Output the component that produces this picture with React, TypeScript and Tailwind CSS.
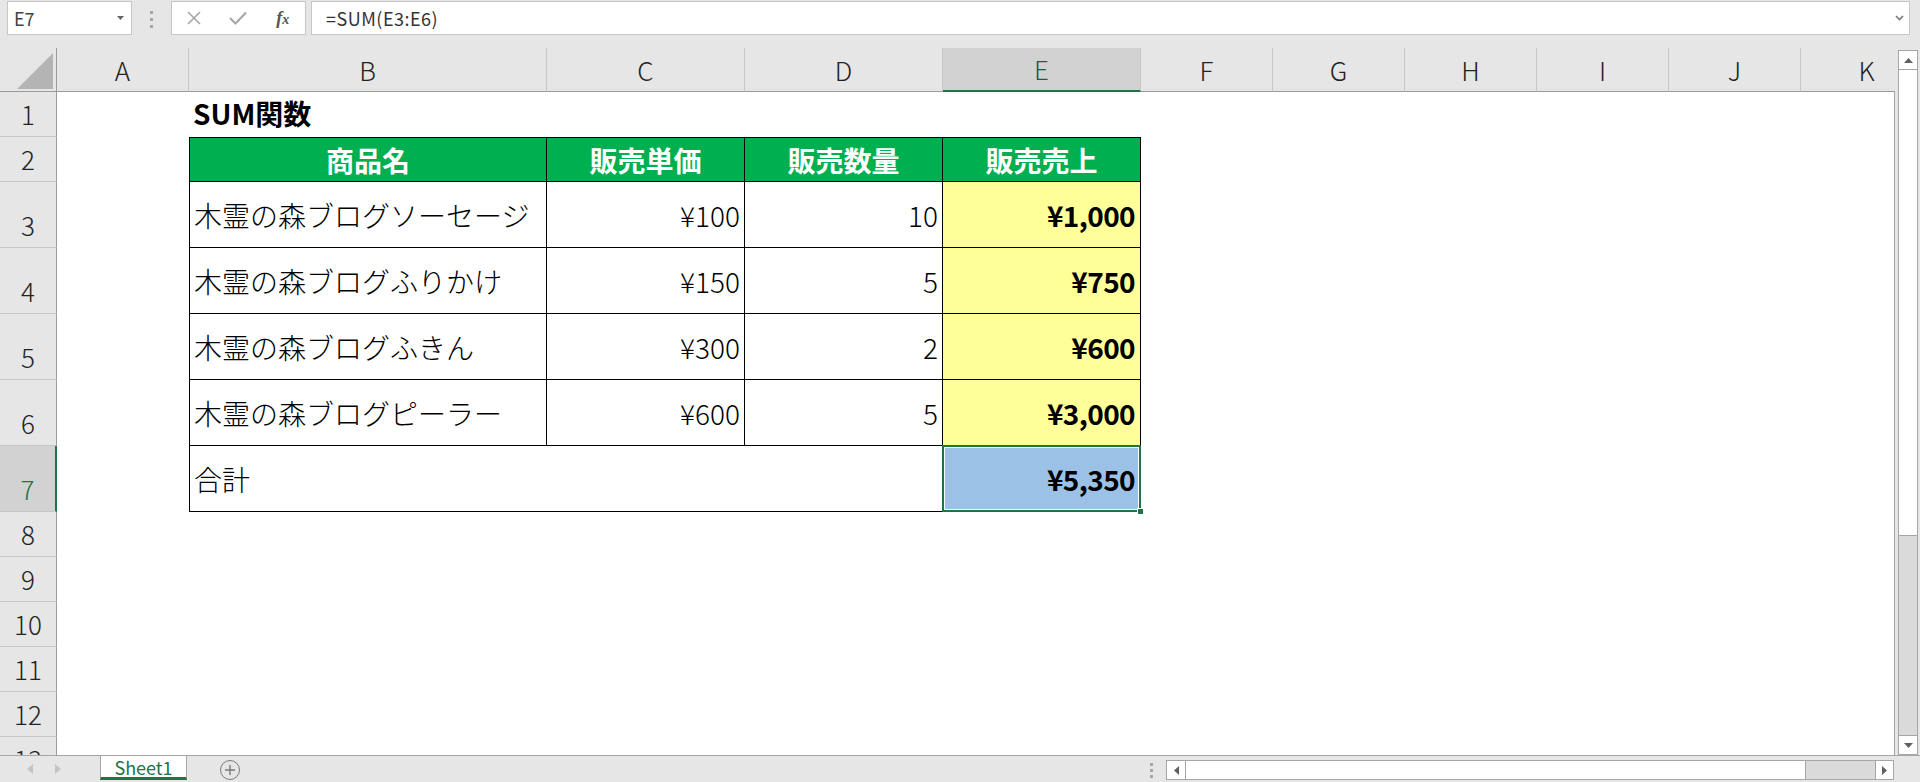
import React from 'react';

const jp = "font-['Noto_Sans_CJK_JP','Noto_Sans',sans-serif]";

const headCols = [
  { id: 'A', w: 'w-[132px]' },
  { id: 'B', w: 'w-[358px]' },
  { id: 'C', w: 'w-[198px]' },
  { id: 'D', w: 'w-[198px]' },
  { id: 'E', w: 'w-[198px]', active: true },
  { id: 'F', w: 'w-[132px]' },
  { id: 'G', w: 'w-[132px]' },
  { id: 'H', w: 'w-[132px]' },
  { id: 'I', w: 'w-[132px]' },
  { id: 'J', w: 'w-[132px]' },
  { id: 'K', w: 'w-[132px]' },
];

const items = [
  { name: '木霊の森ブログソーセージ', price: '¥100', qty: '10', total: '¥1,000' },
  { name: '木霊の森ブログふりかけ', price: '¥150', qty: '5', total: '¥750' },
  { name: '木霊の森ブログふきん', price: '¥300', qty: '2', total: '¥600' },
  { name: '木霊の森ブログピーラー', price: '¥600', qty: '5', total: '¥3,000' },
];

function RowHead({ n, active }: { n: number; active?: boolean }) {
  return (
    <div
      className={`w-[57px] shrink-0 flex items-end justify-center border-b border-[#c6c6c6] ${
        active
          ? 'bg-[#d2d2d2] border-r-2 border-r-[#217346] text-[#217346]'
          : 'bg-[#e6e6e6] border-r border-r-[#9b9b9b] text-[#222]'
      }`}
    >
      <div className="h-[44px] flex items-center justify-center text-[26px] font-light leading-none">{n}</div>
    </div>
  );
}

function FormulaBar() {
  return (
    <div className="h-[48px] shrink-0 flex items-start pt-[1px]">
      <div className="ml-[7px] w-[125px] h-[34px] bg-white border border-[#c6c6c6] flex items-center justify-between pl-[6px] pr-[7px]">
        <span className="text-[18px] text-[#444] leading-none">E7</span>
        <svg width="7" height="4" viewBox="0 0 7 4">
          <path d="M0 0 L7 0 L3.5 4 Z" fill="#666" />
        </svg>
      </div>
      <div className="ml-[18px] mt-[10px] w-[3px] flex flex-col gap-[4px]">
        <div className="h-[3px] bg-[#a6a6a6]" />
        <div className="h-[3px] bg-[#a6a6a6]" />
        <div className="h-[3px] bg-[#a6a6a6]" />
      </div>
      <div className="ml-[18px] w-[135px] h-[34px] bg-white border border-[#c6c6c6] flex items-center">
        <div className="w-[45px] flex justify-center">
          <svg width="14" height="14" viewBox="0 0 14 14">
            <path d="M1 1 L13 13 M13 1 L1 13" stroke="#a6a6a6" strokeWidth="1.6" />
          </svg>
        </div>
        <div className="w-[45px] flex justify-center">
          <svg width="18" height="14" viewBox="0 0 18 14">
            <path d="M1 7 L6.5 12.5 L17 1.5" stroke="#a6a6a6" strokeWidth="2" fill="none" />
          </svg>
        </div>
        <div className="w-[45px] flex justify-center">
          <span className="font-['Liberation_Serif',serif] italic font-bold text-[18px] text-[#555] leading-none">
            f<span className="text-[14px]">x</span>
          </span>
        </div>
      </div>
      <div className="ml-[5px] mr-[10px] flex-1 h-[34px] bg-white border border-[#c6c6c6] flex items-center justify-between pl-[14px] pr-[5px]">
        <span className="text-[18px] tracking-[0.5px] text-[#333] leading-none">=SUM(E3:E6)</span>
        <svg width="9" height="6" viewBox="0 0 9 6">
          <path d="M1 1 L4.5 4.5 L8 1" stroke="#777" strokeWidth="1.6" fill="none" />
        </svg>
      </div>
    </div>
  );
}

function HeaderRow() {
  return (
    <div className="flex h-[44px] shrink-0">
      <div className="w-[57px] shrink-0 border-r border-b border-[#9b9b9b] bg-[#e6e6e6]">
        <svg width="56" height="43" viewBox="0 0 56 43">
          <polygon points="17,41 53,41 53,5" fill="#b4b4b4" />
        </svg>
      </div>
      {headCols.map((c) => (
        <div
          key={c.id}
          className={`${c.w} shrink-0 flex items-center justify-center border-r border-r-[#c6c6c6] text-[26px] font-light leading-none ${
            c.active
              ? 'bg-[#d2d2d2] border-b-2 border-b-[#217346] text-[#1e5c3a]'
              : 'bg-[#e6e6e6] border-b border-b-[#9b9b9b] text-[#222]'
          }`}
        >
          {c.id}
        </div>
      ))}
    </div>
  );
}

function Sheet() {
  const line = 'border-black';
  return (
    <div className="flex-1 bg-white border-r border-[#a6a6a6] overflow-hidden flex flex-col text-black">
      <div className="flex h-[45px] shrink-0">
        <RowHead n={1} />
        <div className="w-[132px] shrink-0" />
        <div className="w-[358px] shrink-0 flex items-center pl-[4px] pb-[3px] text-[28px] font-bold leading-none whitespace-nowrap">
          SUM関数
        </div>
      </div>

      <div className="flex h-[45px] shrink-0">
        <RowHead n={2} />
        <div className="w-[132px] shrink-0" />
        <div className={`w-[358px] shrink-0 flex items-center justify-center bg-[#00b050] border ${line} text-white text-[28px] font-bold leading-none`}>
          商品名
        </div>
        <div className={`w-[198px] shrink-0 flex items-center justify-center bg-[#00b050] border-t border-r border-b ${line} text-white text-[28px] font-bold leading-none`}>
          販売単価
        </div>
        <div className={`w-[198px] shrink-0 flex items-center justify-center bg-[#00b050] border-t border-r border-b ${line} text-white text-[28px] font-bold leading-none`}>
          販売数量
        </div>
        <div className={`w-[198px] shrink-0 flex items-center justify-center bg-[#00b050] border-t border-r border-b ${line} text-white text-[28px] font-bold leading-none`}>
          販売売上
        </div>
      </div>

      {items.map((it, i) => (
        <div key={it.name} className="flex h-[66px] shrink-0">
          <RowHead n={i + 3} />
          <div className="w-[132px] shrink-0" />
          <div className={`w-[358px] shrink-0 flex items-center px-[4px] border-l border-r border-b ${line} text-[28px] font-light leading-none whitespace-nowrap`}>
            {it.name}
          </div>
          <div className={`w-[198px] shrink-0 flex items-center justify-end pr-[4px] border-r border-b ${line} text-[28px] font-light leading-none`}>
            {it.price}
          </div>
          <div className={`w-[198px] shrink-0 flex items-center justify-end pr-[4px] border-r border-b ${line} text-[28px] font-light leading-none`}>
            {it.qty}
          </div>
          <div className={`w-[198px] shrink-0 flex items-center justify-end pr-[5px] bg-[#ffff99] border-r border-b ${line} text-[28px] font-bold tracking-[-0.6px] leading-none`}>
            {it.total}
          </div>
        </div>
      ))}

      <div className="flex h-[66px] shrink-0">
        <RowHead n={7} active />
        <div className="w-[132px] shrink-0" />
        <div className={`w-[754px] shrink-0 flex items-center px-[4px] border-l border-r border-b ${line} text-[28px] font-light leading-none`}>
          合計
        </div>
        <div className={`relative w-[198px] shrink-0 flex items-center justify-end pr-[5px] bg-[#9bc2e6] border-r border-b ${line} text-[28px] font-bold tracking-[-0.6px] leading-none`}>
          ¥5,350
          <div className="absolute -top-[1px] -left-[1px] -right-[1px] -bottom-[1px] border-2 border-[#217346] z-10">
            <div className="w-full h-full border border-white" />
          </div>
          <div className="absolute -right-[4px] -bottom-[4px] w-[7px] h-[7px] bg-[#217346] border border-white z-20" />
        </div>
      </div>

      {[8, 9, 10, 11, 12, 13].map((n) => (
        <div key={n} className="flex h-[45px] shrink-0">
          <RowHead n={n} />
        </div>
      ))}
    </div>
  );
}

function VScroll() {
  return (
    <div className="ml-[3px] mt-[2px] w-[20px] flex flex-col border border-[#a6a6a6] bg-[#dadada]">
      <div className="h-[19px] shrink-0 bg-white border-b border-[#a6a6a6] flex items-center justify-center">
        <svg width="9" height="5" viewBox="0 0 9 5">
          <path d="M0 5 L4.5 0 L9 5 Z" fill="#606060" />
        </svg>
      </div>
      <div className="h-[466px] shrink-0 bg-white border-b border-[#a6a6a6]" />
      <div className="flex-1" />
      <div className="h-[19px] shrink-0 bg-white border-t border-[#a6a6a6] flex items-center justify-center">
        <svg width="9" height="5" viewBox="0 0 9 5">
          <path d="M0 0 L4.5 5 L9 0 Z" fill="#606060" />
        </svg>
      </div>
    </div>
  );
}

function TabBar() {
  return (
    <div className="h-[27px] shrink-0 flex items-start border-t border-[#a6a6a6]">
      <div className="w-[100px] h-[26px] flex items-center">
        <svg className="ml-[27px]" width="6" height="10" viewBox="0 0 6 10">
          <path d="M6 0 L0 5 L6 10 Z" fill="#c4c4c4" />
        </svg>
        <svg className="ml-[22px]" width="6" height="10" viewBox="0 0 6 10">
          <path d="M0 0 L6 5 L0 10 Z" fill="#c4c4c4" />
        </svg>
      </div>
      <div className="w-[87px] h-[24px] bg-white border-x border-[#a6a6a6] border-b-[3px] border-b-[#217346] flex items-center justify-center">
        <span className="text-[18px] text-[#217346] leading-none">Sheet1</span>
      </div>
      <div className="ml-[33px] mt-[4px] w-[20px] h-[20px] rounded-full border border-[#7a7a7a] flex items-center justify-center">
        <svg width="12" height="12" viewBox="0 0 12 12">
          <path d="M6 1 L6 11 M1 6 L11 6" stroke="#7a7a7a" strokeWidth="1.4" />
        </svg>
      </div>
      <div className="flex-1" />
      <div className="mt-[7px] w-[3px] flex flex-col gap-[3px]">
        <div className="h-[3px] bg-[#a6a6a6]" />
        <div className="h-[3px] bg-[#a6a6a6]" />
        <div className="h-[3px] bg-[#a6a6a6]" />
      </div>
      <div className="ml-[13px] mr-[26px] mt-[4px] w-[728px] h-[20px] border border-[#a6a6a6] bg-[#dadada] flex">
        <div className="w-[19px] bg-white border-r border-[#a6a6a6] flex items-center justify-center">
          <svg width="5" height="9" viewBox="0 0 5 9">
            <path d="M5 0 L0 4.5 L5 9 Z" fill="#606060" />
          </svg>
        </div>
        <div className="w-[620px] bg-white border-r border-[#a6a6a6]" />
        <div className="flex-1" />
        <div className="w-[18px] bg-white border-l border-[#a6a6a6] flex items-center justify-center">
          <svg width="5" height="9" viewBox="0 0 5 9">
            <path d="M0 0 L5 4.5 L0 9 Z" fill="#606060" />
          </svg>
        </div>
      </div>
    </div>
  );
}

export default function App() {
  return (
    <div className={`w-[1920px] h-[782px] overflow-hidden bg-[#e6e6e6] flex flex-col ${jp}`}>
      <FormulaBar />
      <div className="flex h-[707px] shrink-0">
        <div className="w-[1895px] shrink-0 flex flex-col overflow-hidden">
          <HeaderRow />
          <Sheet />
        </div>
        <VScroll />
      </div>
      <TabBar />
    </div>
  );
}
